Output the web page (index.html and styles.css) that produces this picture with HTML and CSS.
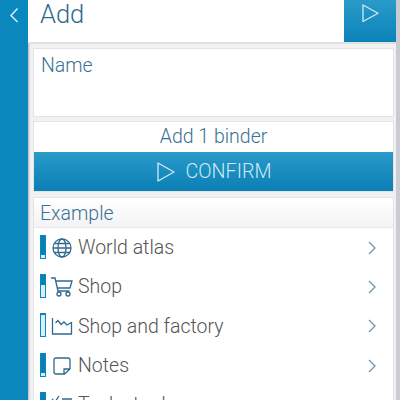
FILE: index.html
```html
<!DOCTYPE html>
<html lang="en">
<head>
<meta charset="utf-8">
<title>Add</title>
<link rel="stylesheet" href="styles.css">
</head>
<body>
<div class="app">
  <aside class="side">
    <svg class="back" width="12" height="18" viewBox="0 0 12 18"><path d="M9.500 2.500 L3 9.500 L9.500 16" /></svg>
  </aside>
  <main class="main">
    <header class="top">
      <h1 class="title">Add</h1>
      <button class="go"><svg width="20" height="20" viewBox="0 0 20 20"><path d="M3 2 V18.500 L18 10.200 Z"/></svg></button>
    </header>
    <section class="card name"><span class="label">Name</span></section>
    <section class="card add">
      <div class="addtext">Add 1 binder</div>
      <button class="confirm"><svg width="20" height="22" viewBox="0 0 20 22"><path d="M2 2 V20 L18 11 Z"/></svg><span>CONFIRM</span></button>
    </section>
    <section class="card list">
      <div class="listhead">Example</div>
      <div class="row">
        <span class="gauge"><i class="f1"></i></span>
        <svg class="ico" viewBox="0 0 22 22"><circle cx="11" cy="11" r="9"/><ellipse cx="11" cy="11" rx="4" ry="9"/><path d="M2 11H20M3.200 6.500H18.800M3.200 15.500H18.800"/></svg>
        <span class="txt">World atlas</span>
        <svg class="chev" viewBox="0 0 8 14"><path d="M1 1L7 7L1 13"/></svg>
      </div>
      <div class="row">
        <span class="gauge"><i class="f2"></i></span>
        <svg class="ico" viewBox="0 0 22 22"><path d="M0 2H4L7 15H18.500M5 5H21L19 12H6.500"/><circle cx="8" cy="18" r="2"/><circle cx="17" cy="18" r="2"/></svg>
        <span class="txt">Shop</span>
        <svg class="chev" viewBox="0 0 8 14"><path d="M1 1L7 7L1 13"/></svg>
      </div>
      <div class="row">
        <span class="gauge"><i class="f3"></i></span>
        <svg class="ico" viewBox="0 0 22 22"><path d="M1.500 3V19H20.500V7.500L16 10L13 7L10 9.500L7 5.500L4.500 8"/></svg>
        <span class="txt">Shop and factory</span>
        <svg class="chev" viewBox="0 0 8 14"><path d="M1 1L7 7L1 13"/></svg>
      </div>
      <div class="row">
        <span class="gauge"><i class="f1"></i></span>
        <svg class="ico" viewBox="0 0 22 22"><path d="M13.500 19H5Q3 19 3 17V5Q3 3 5 3H17Q19 3 19 5V14ZM13 19V14H19"/></svg>
        <span class="txt">Notes</span>
        <svg class="chev" viewBox="0 0 8 14"><path d="M1 1L7 7L1 13"/></svg>
      </div>
      <div class="row">
        <span class="gauge"><i class="f1"></i></span>
        <svg class="ico" viewBox="0 0 22 22"><path d="M1 5L4 8L8 2M11 5H21M11 14H21"/></svg>
        <span class="txt">Tasks to do</span>
      </div>
    </section>
  </main>
  <div class="edge"></div>
</div>
</body>
</html>
```
FILE: styles.css
```css
html, body { margin: 0; padding: 0; height: 400px; overflow: hidden; }
body { font-family: Roboto, "Liberation Sans", sans-serif; font-weight: 300; }
.app { display: flex; height: 400px; overflow: hidden; background: #f1f1f1; }
.side { width: 28px; flex: none; background: #0a87bd; box-shadow: 1px 0 2px rgba(0,0,0,.25); display: flex; justify-content: center; align-items: flex-start; padding-top: 6px; box-sizing: border-box; }
.back { fill: none; stroke: #d4eef8; stroke-width: 1.500; }
.main { flex: 1; min-width: 0; }
.edge { width: 4px; flex: none; background: #c9cdd1; }
.top { height: 42px; background: #fff; display: flex; justify-content: space-between; border-bottom: 2px solid #e0e0e0; box-sizing: content-box; }
.title { margin: 0; padding: 0 0 0 12px; font-size: 25.500px; line-height: 29px; font-weight: 300; color: #2f6a90; }
.go { width: 52px; height: 42px; padding: 0; border: 0; background: linear-gradient(#2a9ac9, #0a83b9); display: flex; align-items: flex-start; justify-content: center; padding-top: 3px; }
.go path, .confirm path { fill: none; stroke: #cfeaf5; stroke-width: 1.300; stroke-linejoin: round; }
.card { margin: 4px 2px 0 5px; background: #fff; border: 1px solid #e4e4e4; }
.name { padding: 6px 7px; margin-top: 4px; height: 55px; }
.label { font-size: 19.500px; line-height: 22px; color: #3a7195; }
.add { margin-top: 4px; }
.addtext { height: 30px; line-height: 30px; text-align: center; font-size: 19.500px; color: #3a7195; }
.confirm { display: flex; width: 100%; height: 39px; padding: 0; border: 0; background: linear-gradient(#2a9ac9, #0a7fb5); align-items: center; justify-content: center; gap: 10px; font: inherit; font-size: 19.700px; color: #cfeaf5; }
.list { margin-top: 5px; }
.listhead { height: 29px; line-height: 31px; padding-left: 6px; font-size: 19.500px; color: #3a7195; background: linear-gradient(#fff, #f3f3f3); border-bottom: 1px solid #e8e8e8; }
.row { height: 39.300px; display: flex; align-items: center; padding-left: 6px; position: relative; }
.gauge { width: 6px; height: 24px; margin-bottom: 2px; box-sizing: border-box; background: #0a7fb5; border: 1px solid #0a87bd; display: flex; align-items: flex-end; flex: none; }
.gauge i { display: block; width: 100%; background: #d8eff8; }
.f1 { height: 3px; }
.f2 { height: 12px; }
.f3 { height: 21px; }
.ico { width: 22px; height: 22px; margin-left: 5px; flex: none; fill: none; stroke: #2f6a90; stroke-width: 1.300; }
.txt { margin-left: 5px; flex: 1; font-size: 19.500px; color: #555; }
.chev { width: 8px; height: 14px; margin-right: 17px; flex: none; fill: none; stroke: #6f96ad; stroke-width: 1.300; }
```
